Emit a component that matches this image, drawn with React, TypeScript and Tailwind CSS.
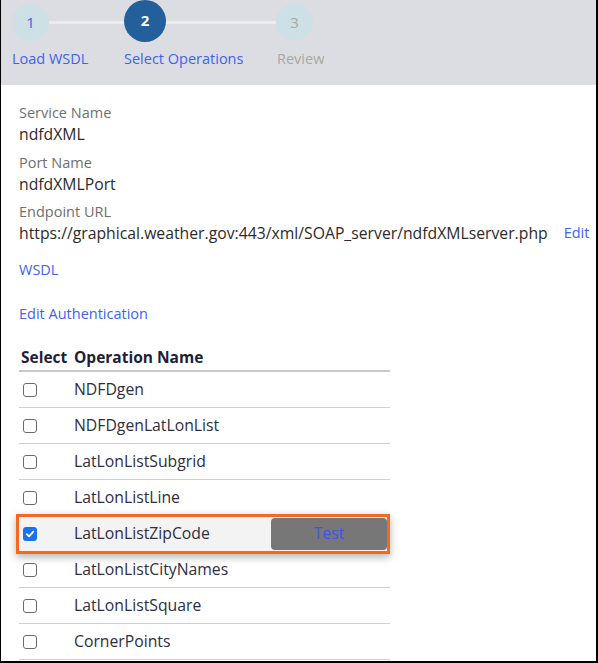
import React from "react";

const ops = [
  "NDFDgen",
  "NDFDgenLatLonList",
  "LatLonListSubgrid",
  "LatLonListLine",
  "LatLonListZipCode",
  "LatLonListCityNames",
  "LatLonListSquare",
  "CornerPoints",
];

function Box({ checked }: { checked?: boolean }) {
  if (checked) {
    return (
      <span className="flex h-[14px] w-[14px] items-center justify-center rounded-[3px] bg-[#1a73e8]">
        <svg width="10" height="10" viewBox="0 0 10 10">
          <path d="M1.8 5.2 L4 7.3 L8.3 2.6" stroke="white" strokeWidth="1.8" fill="none" strokeLinecap="round" strokeLinejoin="round" />
        </svg>
      </span>
    );
  }
  return <span className="block h-[14px] w-[14px] rounded-[3px] border border-[#6b6b6b] bg-white" />;
}

export default function App() {
  return (
    <div className="h-[663px] w-[598px] overflow-hidden border-b-2 border-l border-r-2 border-black bg-white font-['Open_Sans',sans-serif]">
      <div className="flex h-[85px] bg-[#dcdde2] pl-[11px]">
        <div className="flex w-[112px] flex-col">
          <div className="flex h-[44px] items-center">
            <div className="flex h-[37px] w-[37px] shrink-0 items-center justify-center rounded-full bg-[#cde0e6] text-[15px] text-[#3d63f0]">1</div>
            <div className="h-[3px] flex-1 bg-[#ececec]" />
          </div>
          <div className="mt-[5px] text-[14.5px] leading-[20px] text-[#3d63f0]">Load WSDL</div>
        </div>
        <div className="flex w-[152px] flex-col">
          <div className="flex h-[44px] items-center">
            <div className="mb-[3px] flex h-[42px] w-[42px] shrink-0 items-center justify-center rounded-full bg-[#235f9b] text-[15px] font-bold text-white">2</div>
            <div className="h-[3px] flex-1 bg-[#ececec]" />
          </div>
          <div className="mt-[5px] text-[14.5px] leading-[20px] text-[#3d63f0]">Select Operations</div>
        </div>
        <div className="flex flex-col">
          <div className="flex h-[44px] items-center">
            <div className="flex h-[37px] w-[37px] shrink-0 items-center justify-center rounded-full bg-[#cde0e6] text-[15px] text-[#a9a99f]">3</div>
          </div>
          <div className="mt-[5px] pl-[1px] text-[14.5px] leading-[20px] text-[#a9a99f]">Review</div>
        </div>
      </div>

      <div className="pl-[18px] pt-[18px]">
        <div className="text-[14.5px] leading-[20px] text-[#6f6f6f]">Service Name</div>
        <div className="text-[15.75px] leading-[22px] text-[#2b2b2b]">ndfdXML</div>
        <div className="mt-[8px] text-[14.5px] leading-[20px] text-[#6f6f6f]">Port Name</div>
        <div className="text-[15.75px] leading-[22px] text-[#2b2b2b]">ndfdXMLPort</div>
        <div className="mt-[7px] text-[14.5px] leading-[20px] text-[#6f6f6f]">Endpoint URL</div>
        <div className="flex items-center text-[15.75px] leading-[22px]">
          <span className="text-[#2b2b2b]">https://graphical.weather.gov:443/xml/SOAP_server/ndfdXMLserver.php</span>
          <span className="ml-[16px] text-[14.5px] text-[#3d63f0]">Edit</span>
        </div>
        <div className="mt-[16px] text-[14.5px] leading-[20px] text-[#3d63f0]">WSDL</div>
        <div className="mt-[24px] text-[14.5px] leading-[20px] text-[#3d63f0]">Edit Authentication</div>

        <div className="mt-[22px] w-[371px]">
          <div className="flex h-[26px] items-center border-b-2 border-[#c8c8c8] text-[15.5px] font-bold text-[#1e1e38]">
            <span className="w-[55px] pl-[2px]">Select</span>
            <span>Operation Name</span>
          </div>
          {ops.map((op) => {
            const sel = op === "LatLonListZipCode";
            if (sel) {
              return (
                <div key={op} className="relative z-10 -my-[2px] -ml-[3px] flex h-[40px] items-center border-[3px] border-[#f26a22] bg-[#f3f3f3] shadow-[0_3px_8px_rgba(0,0,0,0.3)]">
                  <span className="w-[55px] pl-[4px]"><Box checked /></span>
                  <span className="flex-1 text-[15.75px] text-[#2e2e3e]">{op}</span>
                  <span className="flex h-[32px] w-[116px] items-center justify-center rounded-[4px] bg-[#777777] text-[15.75px] text-[#3d55f0]">Test</span>
                </div>
              );
            }
            return (
              <div key={op} className="flex h-[36px] items-center border-b border-[#cfcfcf]">
                <span className="w-[55px] pl-[4px]"><Box /></span>
                <span className="text-[15.75px] text-[#2e2e3e]">{op}</span>
              </div>
            );
          })}
        </div>
      </div>
    </div>
  );
}
